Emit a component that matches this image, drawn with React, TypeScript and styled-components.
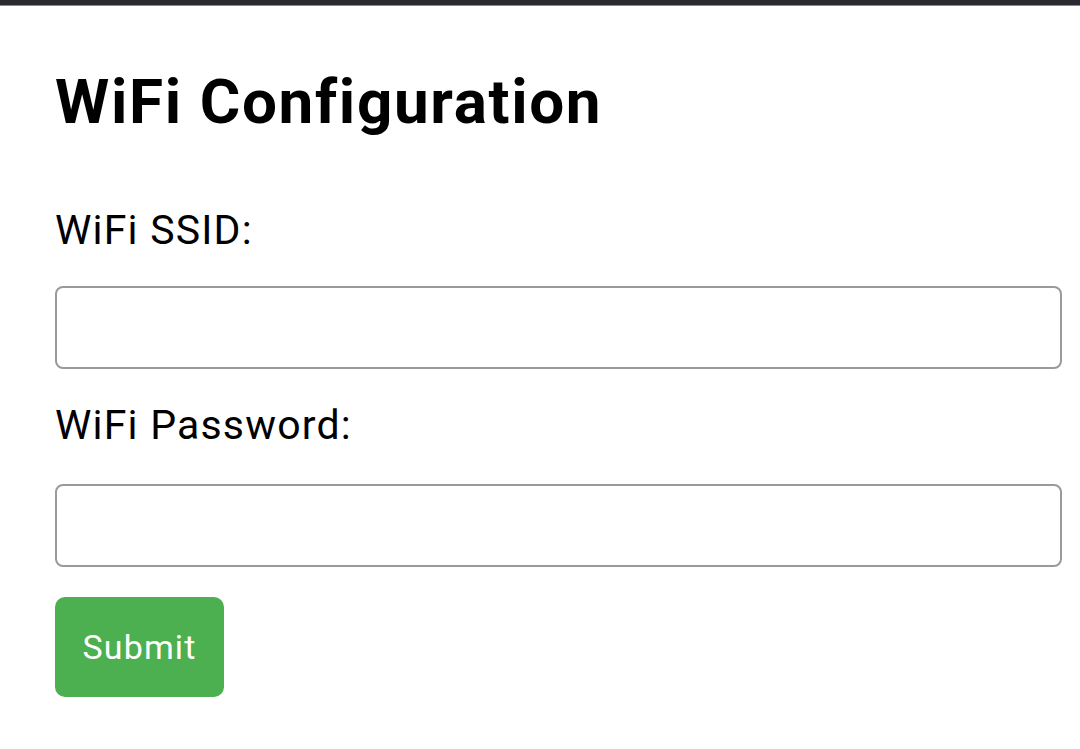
import React from "react";
import styled, { createGlobalStyle } from "styled-components";

const Global = createGlobalStyle`
  html, body { margin: 0; padding: 0; background: #ffffff; }
  body { font-family: Roboto, "Noto Sans", sans-serif; color: #000; }
`;

const TopBar = styled.div`
  height: 5px;
  background: #2b2a30;
  border-bottom: 1px solid #8a8a8c;
`;

const Page = styled.main`
  padding: 0 18px 0 55px;
`;

const Title = styled.h1`
  margin: 60px 0 0;
  font-size: 62px;
  line-height: 72px;
  letter-spacing: 1.65px;
  font-weight: 700;
`;

const Form = styled.form`
  display: flex;
  flex-direction: column;
  align-items: flex-start;
`;

const Label = styled.label<{ $top: number }>`
  font-size: 41px;
  line-height: 48px;
  letter-spacing: 1.2px;
  margin-top: ${(p) => p.$top}px;
`;

const Input = styled.input<{ $top: number }>`
  box-sizing: border-box;
  width: 100%;
  height: 83px;
  margin-top: ${(p) => p.$top}px;
  border: 2px solid #9a9a9e;
  border-radius: 8px;
  font-size: 36px;
  padding: 0 16px;
  background: #fff;
`;

const Button = styled.button`
  margin-top: 30px;
  width: 169px;
  height: 100px;
  border: none;
  border-radius: 10px;
  background: #4caf50;
  color: #fff;
  font-family: Roboto, sans-serif;
  font-size: 34px;
  letter-spacing: 1.1px;
`;

export default function App() {
  return (
    <>
      <Global />
      <TopBar />
      <Page>
        <Title>WiFi Configuration</Title>
        <Form onSubmit={(e) => e.preventDefault()}>
          <Label $top={68}>WiFi SSID:</Label>
          <Input type="text" $top={32} />
          <Label $top={32}>WiFi Password:</Label>
          <Input type="password" $top={35} />
          <Button type="submit">Submit</Button>
        </Form>
      </Page>
    </>
  );
}
